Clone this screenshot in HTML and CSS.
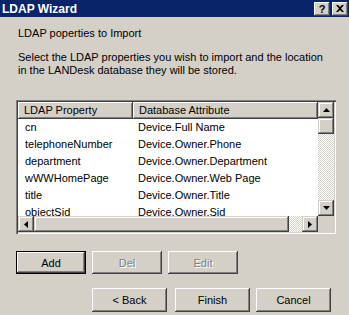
FILE: index.html
```html
<!DOCTYPE html>
<html lang="en">
<head>
    <meta charset="UTF-8">
    <title>LDAP Wizard</title>
    <link rel="stylesheet" href="styles.css">
</head>
<body>
    <div class="window">
        <div class="titlebar">
            <span class="title">LDAP Wizard</span>
            <div class="caption-btns">
                <span class="cap-btn help">?</span>
                <span class="cap-btn close">
                    <svg width="8" height="7" viewBox="0 0 8 7"><path d="M0 0h2l2 2 2-2h2L5 3.5 8 7H6L4 5 2 7H0l3-3.5z" fill="#000"/></svg>
                </span>
            </div>
        </div>

        <div class="content">
            <p class="heading">LDAP poperties to Import</p>
            <p class="desc">Select the LDAP properties you wish to import and the location in the LANDesk database they will be stored.</p>

            <div class="listview">
                <div class="list-area">
                    <div class="list-header">
                        <div class="col-head first">LDAP Property</div>
                        <div class="col-head">Database Attribute</div>
                    </div>
                    <div class="list-row"><span class="c1">cn</span><span>Device.Full Name</span></div>
                    <div class="list-row"><span class="c1">telephoneNumber</span><span>Device.Owner.Phone</span></div>
                    <div class="list-row"><span class="c1">department</span><span>Device.Owner.Department</span></div>
                    <div class="list-row"><span class="c1">wWWHomePage</span><span>Device.Owner.Web Page</span></div>
                    <div class="list-row"><span class="c1">title</span><span>Device.Owner.Title</span></div>
                    <div class="list-row"><span class="c1">objectSid</span><span>Device.Owner.Sid</span></div>
                </div>
                <div class="vscroll">
                    <div class="sb-btn"><svg width="7" height="4" viewBox="0 0 7 4"><path d="M3.5 0L7 4H0z" fill="#000"/></svg></div>
                    <div class="sb-thumb"></div>
                    <div class="sb-track"></div>
                    <div class="sb-btn"><svg width="7" height="4" viewBox="0 0 7 4"><path d="M0 0h7L3.5 4z" fill="#000"/></svg></div>
                </div>
                <div class="hscroll">
                    <div class="sb-btn"><svg width="4" height="7" viewBox="0 0 4 7"><path d="M0 3.5L4 0v7z" fill="#000"/></svg></div>
                    <div class="sb-thumb wide"></div>
                    <div class="sb-track"></div>
                    <div class="sb-btn"><svg width="4" height="7" viewBox="0 0 4 7"><path d="M0 0l4 3.5L0 7z" fill="#000"/></svg></div>
                </div>
                <div class="corner"></div>
            </div>

            <div class="row-buttons">
                <button class="btn default">Add</button>
                <button class="btn" disabled>Del</button>
                <button class="btn" disabled>Edit</button>
            </div>

            <div class="nav-buttons">
                <button class="btn nav back">&lt; Back</button>
                <button class="btn nav">Finish</button>
                <button class="btn nav">Cancel</button>
            </div>
        </div>
    </div>
</body>
</html>
```

FILE: styles.css
```css
* {
    margin: 0;
    padding: 0;
    box-sizing: border-box;
}

body {
    width: 349px;
    height: 315px;
    overflow: hidden;
    background: #d4d0c8;
    font-family: 'Liberation Sans', Arial, sans-serif;
    font-size: 11px;
    color: #000;
}

.titlebar {
    height: 17px;
    background: #0a246a;
    display: flex;
    align-items: center;
    justify-content: space-between;
    padding: 0 1px 0 2px;
}

.title {
    color: #fff;
    font-weight: bold;
    font-size: 12px;
}

.caption-btns {
    display: flex;
    gap: 2px;
}

.cap-btn {
    width: 16px;
    height: 14px;
    background: #d4d0c8;
    display: flex;
    align-items: center;
    justify-content: center;
    font-weight: bold;
    font-size: 11px;
    box-shadow: inset -1px -1px #404040, inset 1px 1px #fff, inset -2px -2px #808080;
}

.content {
    padding: 10px 0 0 16px;
}

.heading {
    margin-left: 2px;
    line-height: 13px;
}

.desc {
    margin: 11px 0 0 2px;
    line-height: 13px;
    width: 310px;
}

.listview {
    margin-top: 23px;
    width: 320px;
    height: 134px;
    display: grid;
    grid-template-columns: 1fr 16px;
    grid-template-rows: 1fr 16px;
    background: #fff;
    box-shadow: inset 1px 1px #808080, inset 2px 2px #404040, inset -1px -1px #fff, inset -2px -2px #d4d0c8;
    padding: 2px;
}

.list-area {
    overflow: hidden;
}

.list-header {
    display: flex;
    height: 17px;
}

.col-head {
    flex: 1;
    background: #d4d0c8;
    line-height: 17px;
    padding-left: 6px;
    box-shadow: inset -1px -1px #404040, inset 1px 1px #fff, inset -2px -2px #808080;
}

.col-head.first {
    flex: 0 0 115px;
}

.list-row {
    display: flex;
    height: 17px;
    line-height: 17px;
}

.list-row span {
    padding-left: 5px;
}

.list-row .c1 {
    width: 115px;
    padding-left: 7px;
}

.vscroll,
.hscroll {
    display: flex;
    flex-direction: column;
}

.hscroll {
    flex-direction: row;
}

.sb-btn {
    flex: 0 0 16px;
    width: 16px;
    height: 16px;
    background: #d4d0c8;
    display: flex;
    align-items: center;
    justify-content: center;
    box-shadow: inset -1px -1px #404040, inset 1px 1px #d4d0c8, inset -2px -2px #808080, inset 2px 2px #fff;
}

.sb-thumb {
    flex: 0 0 16px;
    background: #d4d0c8;
    box-shadow: inset -1px -1px #404040, inset 1px 1px #d4d0c8, inset -2px -2px #808080, inset 2px 2px #fff;
}

.sb-thumb.wide {
    flex: 0 0 255px;
}

.sb-track {
    flex: 1;
    background: repeating-conic-gradient(#fff 0 25%, #d4d0c8 0 50%) 0 0 / 2px 2px;
}

.corner {
    background: #d4d0c8;
}

.row-buttons {
    display: flex;
    gap: 6px;
    margin-top: 17px;
}

.btn {
    width: 70px;
    height: 23px;
    border: none;
    background: #d4d0c8;
    font-family: 'Liberation Sans', Arial, sans-serif;
    font-size: 11px;
    color: #000;
    box-shadow: inset -1px -1px #404040, inset 1px 1px #fff, inset -2px -2px #808080, inset 2px 2px #d4d0c8;
}

.btn.default {
    box-shadow: inset 0 0 0 1px #000, inset -2px -2px #404040, inset 2px 2px #fff, inset -3px -3px #808080;
}

.btn:disabled {
    color: #808080;
    text-shadow: 1px 1px #fff;
}

.nav-buttons {
    display: flex;
    gap: 6px;
    margin: 14px 0 0 76px;
}

.btn.nav {
    width: 75px;
    height: 24px;
}

.btn.back {
    margin-right: 2px;
}
```
